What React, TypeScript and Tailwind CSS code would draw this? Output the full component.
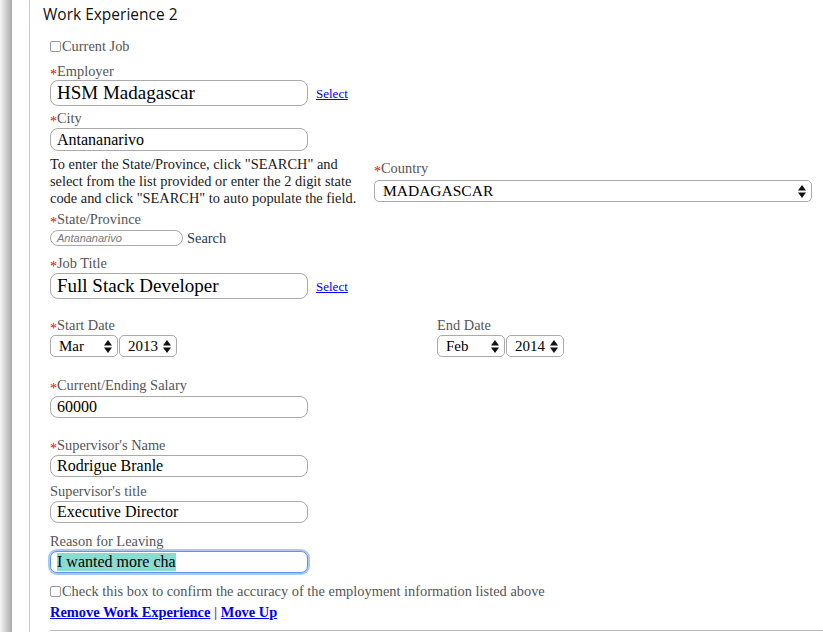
import { ReactNode } from 'react';

const Req = () => (
  <span className="inline-block translate-y-[3px] text-[14px] leading-none text-[#e00]">*</span>
);

type LabelProps = {
  text: string;
  required?: boolean;
  className?: string;
};

const Label = ({ text, required, className = '' }: LabelProps) => (
  <div className={`h-[17px] text-[14.4px] leading-[17px] text-[#555] ${className}`}>
    {required && <Req />}
    {text}
  </div>
);

type BoxProps = {
  value: string;
  size?: 'lg' | 'md';
};

const TextBox = ({ value, size = 'md' }: BoxProps) => (
  <div
    className={`flex w-[258px] items-center rounded-[8px] border border-[#aaa] bg-white pl-[6px] text-black ${
      size === 'lg' ? 'h-[26px] text-[19px]' : 'h-[22px] text-[16px]'
    }`}
  >
    {value}
  </div>
);

const Arrows = () => (
  <svg width="8" height="13" viewBox="0 0 8 13" className="shrink-0">
    <path d="M0 5.5 L4 0 L8 5.5 Z" fill="#111" />
    <path d="M0 7.5 L4 13 L8 7.5 Z" fill="#111" />
  </svg>
);

type SelectProps = {
  value: string;
  className: string;
  textSize?: string;
};

const FakeSelect = ({ value, className, textSize = 'text-[15px]' }: SelectProps) => (
  <div
    className={`flex h-[22px] items-center justify-between rounded-[5px] border border-[#aaa] bg-white pl-[8px] pr-[5px] text-black ${textSize} ${className}`}
  >
    <span>{value}</span>
    <Arrows />
  </div>
);

const Check = ({ children }: { children: ReactNode }) => (
  <div className="flex h-[17px] items-center text-[14.4px] leading-[17px] text-[#555]">
    <span className="mr-[1px] inline-block h-[11px] w-[11px] rounded-[2px] border border-[#999] bg-white" />
    {children}
  </div>
);

const SelectLink = () => (
  <a href="#" className="ml-[8px] mt-[4px] text-[13px] text-[#0000ee] underline">
    Select
  </a>
);

export default function App() {
  return (
    <div className="flex min-h-[632px] w-full bg-white font-['Liberation_Serif',serif]">
      <div className="w-[12px] shrink-0 bg-gradient-to-r from-[#f6f6f6] to-[#a8a8a8]" />
      <div className="w-[17px] shrink-0 bg-white" />
      <div className="flex-1 border-l border-[#c8c8c8] pt-[4px]">
        <h2 className="ml-[13px] font-['Open_Sans',sans-serif] text-[15.5px] leading-[20px] text-[#111]">
          Work Experience 2
        </h2>
        <div className="pl-[20px]">
          <div className="mt-[14px]">
            <Check>Current Job</Check>
          </div>

          <Label text="Employer" required className="mt-[8px]" />
          <div className="flex items-start">
            <TextBox value="HSM Madagascar" size="lg" />
            <SelectLink />
          </div>

          <Label text="City" required className="mt-[4px]" />
          <div className="mt-[1px] flex h-[23px] w-[258px] items-center rounded-[8px] border border-[#aaa] bg-white pl-[6px] text-[16px] text-black">
            Antananarivo
          </div>

          <div className="mt-[5px] flex">
            <div className="w-[324px] shrink-0">
              <p className="w-[318px] text-[14.4px] leading-[17px] text-[#1a1a1a]">
                To enter the State/Province, click "SEARCH" and select from the list provided or enter the 2 digit state code and click "SEARCH" to auto populate the field.
              </p>
              <Label text="State/Province" required className="mt-[4px]" />
              <div className="mt-[2px] flex h-[16px] items-center">
                <div className="flex h-[16px] w-[133px] items-center rounded-[8px] border border-[#aaa] bg-white pl-[6px] font-['Liberation_Sans',sans-serif] text-[11px] italic text-[#777]">
                  Antananarivo
                </div>
                <span className="ml-[4px] text-[14.4px] leading-[16px] text-[#1d3c5c]">Search</span>
              </div>
            </div>
            <div>
              <Label text="Country" required className="mt-[4px]" />
              <FakeSelect value="MADAGASCAR" className="mt-[3px] w-[438px]" textSize="text-[15.5px]" />
            </div>
          </div>

          <Label text="Job Title" required className="mt-[9px]" />
          <div className="mt-[1px] flex items-start">
            <TextBox value="Full Stack Developer" size="lg" />
            <SelectLink />
          </div>

          <div className="mt-[18px] flex">
            <div className="w-[387px] shrink-0">
              <Label text="Start Date" required />
              <div className="mt-[1px] flex gap-[1px]">
                <FakeSelect value="Mar" className="w-[68px]" />
                <FakeSelect value="2013" className="w-[58px]" />
              </div>
            </div>
            <div>
              <Label text="End Date" />
              <div className="mt-[1px] flex gap-[1px]">
                <FakeSelect value="Feb" className="w-[68px]" />
                <FakeSelect value="2014" className="w-[58px]" />
              </div>
            </div>
          </div>

          <Label text="Current/Ending Salary" required className="mt-[20px]" />
          <div className="mt-[2px]">
            <TextBox value="60000" />
          </div>

          <Label text="Supervisor's Name" required className="mt-[19px]" />
          <div className="mt-[1px]">
            <TextBox value="Rodrigue Branle" />
          </div>

          <Label text="Supervisor's title" className="mt-[6px]" />
          <div className="mt-[1px]">
            <TextBox value="Executive Director" />
          </div>

          <Label text="Reason for Leaving" className="mt-[10px]" />
          <div className="mt-[1px] flex h-[22px] w-[258px] items-center rounded-[7px] border border-[#5d96e6] bg-white pl-[6px] text-[16px] text-black shadow-[0_0_0_2px_#a9c8f3]">
            <span className="bg-[#8adbd0] leading-[18px]">I wanted more cha</span>
          </div>

          <div className="mt-[10px]">
            <Check>Check this box to confirm the accuracy of the employment information listed above</Check>
          </div>

          <div className="mt-[4px] h-[17px] text-[14.4px] font-bold leading-[17px] text-[#555]">
            <a href="#" className="text-[#0000ee] underline">
              Remove Work Experience
            </a>{' '}
            |{' '}
            <a href="#" className="text-[#0000ee] underline">
              Move Up
            </a>
          </div>

          <div className="mt-[9px] border-t border-[#bbb]" />
        </div>
      </div>
    </div>
  );
}
